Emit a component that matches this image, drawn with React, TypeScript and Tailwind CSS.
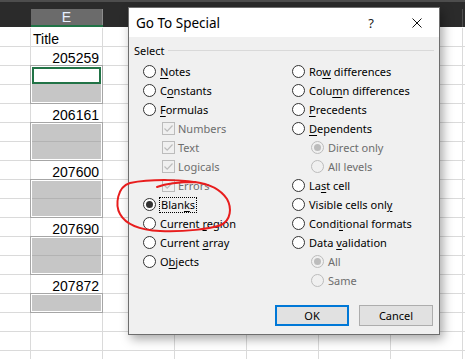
import React from 'react';

type ECell =
  | { kind: 'text'; text: string; right?: boolean }
  | { kind: 'range'; rows: 1 | 2; active?: boolean }
  | { kind: 'empty' };

const eCells: ECell[] = [
  { kind: 'text', text: 'Title' },
  { kind: 'text', text: '205259', right: true },
  { kind: 'range', rows: 2, active: true },
  { kind: 'text', text: '206161', right: true },
  { kind: 'range', rows: 2 },
  { kind: 'text', text: '207600', right: true },
  { kind: 'range', rows: 2 },
  { kind: 'text', text: '207690', right: true },
  { kind: 'range', rows: 2 },
  { kind: 'text', text: '207872', right: true },
  { kind: 'range', rows: 1 },
  { kind: 'empty' },
  { kind: 'empty' },
  { kind: 'empty' },
];

const ROWS = 18;

function PlainColumn({ w }: { w: string }) {
  return (
    <div className={`flex shrink-0 flex-col border-r border-[#dadada] ${w}`}>
      {Array.from({ length: ROWS }).map((_, i) => (
        <div key={i} className="h-[19px] shrink-0 border-b border-[#dadada]" />
      ))}
    </div>
  );
}

function RangeBlock({ rows, active }: { rows: 1 | 2; active?: boolean }) {
  return (
    <div
      className={`relative z-10 -mt-px -ml-px flex w-[73px] shrink-0 flex-col border border-[#a6a6a6] bg-white p-px ${
        rows === 2 ? 'h-[39px]' : 'h-[20px]'
      }`}
    >
      {rows === 2 && active && (
        <>
          <div className="h-[17px] shrink-0 border-2 border-[#217346] bg-white" />
          <div className="flex-1 bg-[#c6c6c6]" />
        </>
      )}
      {rows === 2 && !active && (
        <>
          <div className="flex-1 bg-[#c6c6c6]" />
          <div className="h-px bg-[#b3b3b3]" />
          <div className="flex-1 bg-[#c6c6c6]" />
        </>
      )}
      {rows === 1 && <div className="flex-1 bg-[#c6c6c6]" />}
    </div>
  );
}

function EColumn() {
  return (
    <div className="flex w-[72px] shrink-0 flex-col border-r border-[#dadada] font-['Liberation_Sans',Arial,sans-serif] text-[14px] leading-[16px] text-black">
      {eCells.map((c, i) => {
        if (c.kind === 'range') return <RangeBlock key={i} rows={c.rows} active={c.active} />;
        if (c.kind === 'empty')
          return <div key={i} className="h-[19px] shrink-0 border-b border-[#dadada]" />;
        return (
          <div
            key={i}
            className={`flex h-[19px] shrink-0 border-b border-[#dadada] pt-[3px] ${
              c.right ? 'justify-end pr-[3px]' : 'justify-start pl-[2px]'
            }`}
          >
            {c.text}
          </div>
        );
      })}
    </div>
  );
}

function Radio({ checked, disabled }: { checked?: boolean; disabled?: boolean }) {
  return (
    <span
      className={`flex h-[13px] w-[13px] shrink-0 items-center justify-center rounded-full border ${
        disabled ? 'border-[#bcbcbc] bg-[#f0f0f0]' : 'border-[#333333] bg-white'
      }`}
    >
      {checked && (
        <span className={`h-[7px] w-[7px] rounded-full ${disabled ? 'bg-[#bcbcbc]' : 'bg-[#333333]'}`} />
      )}
    </span>
  );
}

function Check() {
  return (
    <span className="flex h-[13px] w-[13px] shrink-0 items-center justify-center border border-[#bcbcbc] bg-[#f0f0f0]">
      <svg width="11" height="11" viewBox="0 0 11 11">
        <path d="M1.5 5.5 L4.2 8.2 L9.5 2.5" fill="none" stroke="#bcbcbc" strokeWidth="1.2" />
      </svg>
    </span>
  );
}

function Label({ pre, key_, post, disabled }: { pre: string; key_?: string; post?: string; disabled?: boolean }) {
  return (
    <span className={`whitespace-pre ${disabled ? 'text-[#6d6d6d]' : 'text-black'}`}>
      {pre}
      {key_ && <span className="underline decoration-1 underline-offset-[2px]">{key_}</span>}
      {post}
    </span>
  );
}

function Opt({ pre, k, post, checked }: { pre: string; k?: string; post?: string; checked?: boolean }) {
  return (
    <div className="flex h-[19px] items-center gap-[4px]">
      <Radio checked={checked} />
      <Label pre={pre} key_={k} post={post} />
    </div>
  );
}

function SubCheck({ text }: { text: string }) {
  return (
    <div className="flex h-[19px] items-center gap-[3px] pl-[19px]">
      <Check />
      <Label pre={text} disabled />
    </div>
  );
}

function SubRadio({ text, checked }: { text: string; checked?: boolean }) {
  return (
    <div className="flex h-[19px] items-center gap-[4px] pl-[19px]">
      <Radio checked={checked} disabled />
      <Label pre={text} disabled />
    </div>
  );
}

function Dialog() {
  return (
    <div className="absolute left-[128px] top-[7px] z-20 flex h-[328px] w-[312px] flex-col border border-[#6e6e6e] bg-[#f0f0f0] font-['Noto_Sans','Open_Sans',sans-serif] text-[11px] leading-[15px] shadow-[3px_4px_10px_rgba(0,0,0,0.35)]">
      <div className="flex h-[29px] shrink-0 items-center bg-white">
        <span className="pl-[7px] pt-px text-[13.5px] text-black">Go To Special</span>
        <span className="ml-auto pt-px text-[13px] text-[#222]">?</span>
        <span className="ml-[38px] mr-[17px] flex">
          <svg width="10" height="10" viewBox="0 0 10 10">
            <path d="M0.5 0.5 L9.5 9.5 M9.5 0.5 L0.5 9.5" stroke="#111" strokeWidth="1" />
          </svg>
        </span>
      </div>
      <div className="mt-[6px] flex h-[14px] items-center pl-[5px] pr-[5px]">
        <span className="text-black">Select</span>
        <div className="ml-[3px] h-px flex-1 bg-[#d9d9d9]" />
      </div>
      <div className="mt-[5px] flex pl-[14px]">
        <div className="flex w-[149px] flex-col">
          <Opt pre="" k="N" post="otes" />
          <Opt pre="C" k="o" post="nstants" />
          <Opt pre="" k="F" post="ormulas" />
          <SubCheck text="Numbers" />
          <SubCheck text="Text" />
          <SubCheck text="Logicals" />
          <SubCheck text="Errors" />
          <div className="flex h-[19px] items-center gap-[3px]">
            <Radio checked />
            <span className="border border-dotted border-black px-px leading-[14px]">
              <Label pre="Blan" key_="k" post="s" />
            </span>
          </div>
          <Opt pre="Current " k="r" post="egion" />
          <Opt pre="Current " k="a" post="rray" />
          <Opt pre="O" k="b" post="jects" />
        </div>
        <div className="flex flex-col">
          <Opt pre="Ro" k="w" post=" differences" />
          <Opt pre="Colu" k="m" post="n differences" />
          <Opt pre="" k="P" post="recedents" />
          <Opt pre="" k="D" post="ependents" />
          <SubRadio text="Direct only" checked />
          <SubRadio text="All levels" />
          <Opt pre="La" k="s" post="t cell" />
          <Opt pre="Visible cells onl" k="y" post="" />
          <Opt pre="Condi" k="t" post="ional formats" />
          <Opt pre="Data " k="v" post="alidation" />
          <SubRadio text="All" checked />
          <SubRadio text="Same" />
        </div>
      </div>
      <div className="mt-auto mb-[8px] flex justify-end gap-[10px] pr-[6px]">
        <button className="flex h-[21px] w-[74px] items-center justify-center border-2 border-[#0078d7] bg-[#e1e1e1] text-black">
          OK
        </button>
        <button className="flex h-[21px] w-[74px] items-center justify-center border border-[#adadad] bg-[#e1e1e1] text-black">
          Cancel
        </button>
      </div>
    </div>
  );
}

export default function App() {
  return (
    <div className="relative h-[359px] w-[465px] overflow-hidden bg-white">
      {/* header */}
      <div className="flex h-[27px] flex-col bg-[#2b2b2b]">
        <div className="h-[2px] bg-[#4d4d4d]" />
        <div className="h-[7px]" />
        <div className="flex h-[18px]">
          <div className="w-[31px] shrink-0" />
          <div className="flex w-[72px] shrink-0 flex-col">
            <div className="flex flex-1 items-center justify-center border-r border-[#8c8c8c] bg-[#6b6b6b] font-['Liberation_Sans',Arial,sans-serif] text-[14px] leading-[16px] text-[#e8f0ff]">
              E
            </div>
            <div className="h-[2px] bg-[#217346]" />
          </div>
          {Array.from({ length: 6 }).map((_, i) => (
            <div key={i} className="w-[72px] shrink-0 border-r border-[#4f4f4f]" />
          ))}
        </div>
      </div>
      {/* grid */}
      <div className="flex pt-px">
        <PlainColumn w="w-[31px]" />
        <EColumn />
        <PlainColumn w="w-[72px]" />
        <PlainColumn w="w-[72px]" />
        <PlainColumn w="w-[72px]" />
        <PlainColumn w="w-[72px]" />
        <PlainColumn w="w-[72px]" />
        <PlainColumn w="w-[72px]" />
      </div>
      <Dialog />
      <svg className="pointer-events-none absolute left-0 top-0 z-30" width="465" height="359" viewBox="0 0 465 359">
        <path
          d="M205,184 C185,179 150,179 130,183 C117,187 115,205 120,214 C126,225 140,230 160,231 C185,232 210,229 221,225 C231,220 232,208 227,199 C221,190 210,184 195,182 C180,182 165,184 157,187"
          fill="none"
          stroke="#e81d1d"
          strokeWidth="2"
          strokeLinecap="round"
        />
      </svg>
    </div>
  );
}
